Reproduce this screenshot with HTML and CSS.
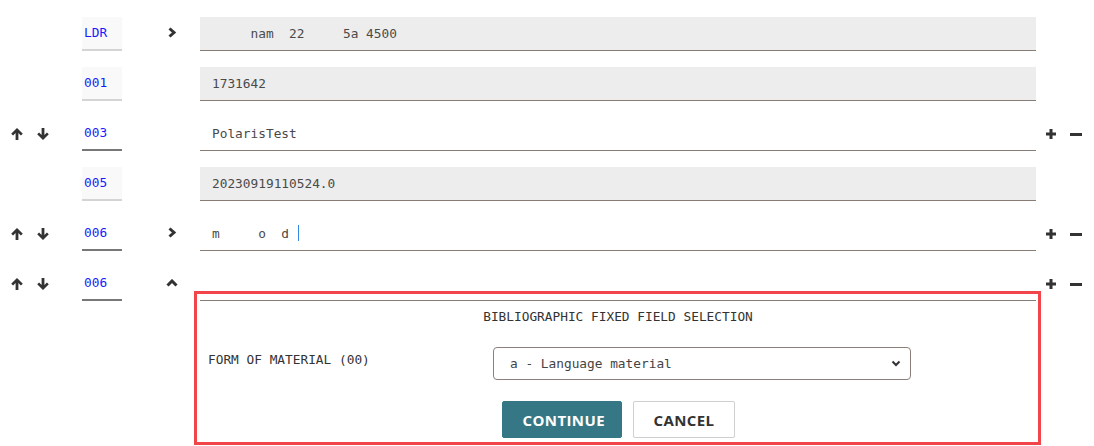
FILE: index.html
```html
<!DOCTYPE html>
<html>
	<head>
		<title>MARC editor</title>
		<link rel="stylesheet" href="styles.css">
	</head>
	<body>
		<div class="editor">
			<!-- LDR -->
			<div class="row">
				<div class="moves"></div>
				<div class="tag readonly">LDR</div>
				<div class="toggle">
					<svg class="chev" viewBox="0 0 10 11"><polyline points="2.5,1.5 7,5.5 2.5,9.5"/></svg>
				</div>
				<div class="field readonly">     nam  22     5a 4500</div>
				<div class="actions"></div>
			</div>

			<div class="row">
				<div class="moves"></div>
				<div class="tag readonly">001</div>
				<div class="toggle"></div>
				<div class="field readonly">1731642</div>
				<div class="actions"></div>
			</div>

			<div class="row">
				<div class="moves">
					<svg class="arrow" viewBox="0 0 12 12"><path d="M6 0L11.8 5.8 9.9 7.6 7.4 5.1V12H4.6V5.1L2.1 7.6 0.2 5.8Z"/></svg>
					<svg class="arrow down" viewBox="0 0 12 12"><path d="M6 0L11.8 5.8 9.9 7.6 7.4 5.1V12H4.6V5.1L2.1 7.6 0.2 5.8Z"/></svg>
				</div>
				<div class="tag">003</div>
				<div class="toggle"></div>
				<div class="field">PolarisTest</div>
				<div class="actions">
					<svg class="plus" viewBox="0 0 10 10"><rect x="3.5" y="0" width="3" height="10"/><rect x="0" y="3.5" width="10" height="3"/></svg>
					<svg class="minus" viewBox="0 0 12 3"><rect x="0" y="0" width="12" height="3"/></svg>
				</div>
			</div>

			<div class="row">
				<div class="moves"></div>
				<div class="tag readonly">005</div>
				<div class="toggle"></div>
				<div class="field readonly">20230919110524.0</div>
				<div class="actions"></div>
			</div>

			<div class="row">
				<div class="moves">
					<svg class="arrow" viewBox="0 0 12 12"><path d="M6 0L11.8 5.8 9.9 7.6 7.4 5.1V12H4.6V5.1L2.1 7.6 0.2 5.8Z"/></svg>
					<svg class="arrow down" viewBox="0 0 12 12"><path d="M6 0L11.8 5.8 9.9 7.6 7.4 5.1V12H4.6V5.1L2.1 7.6 0.2 5.8Z"/></svg>
				</div>
				<div class="tag">006</div>
				<div class="toggle">
					<svg class="chev" viewBox="0 0 10 11"><polyline points="2.5,1.5 7,5.5 2.5,9.5"/></svg>
				</div>
				<div class="field">m     o  d <span class="caret"></span></div>
				<div class="actions">
					<svg class="plus" viewBox="0 0 10 10"><rect x="3.5" y="0" width="3" height="10"/><rect x="0" y="3.5" width="10" height="3"/></svg>
					<svg class="minus" viewBox="0 0 12 3"><rect x="0" y="0" width="12" height="3"/></svg>
				</div>
			</div>

			<!-- 006 expanded -->
			<div class="row open">
				<div class="moves">
					<svg class="arrow" viewBox="0 0 12 12"><path d="M6 0L11.8 5.8 9.9 7.6 7.4 5.1V12H4.6V5.1L2.1 7.6 0.2 5.8Z"/></svg>
					<svg class="arrow down" viewBox="0 0 12 12"><path d="M6 0L11.8 5.8 9.9 7.6 7.4 5.1V12H4.6V5.1L2.1 7.6 0.2 5.8Z"/></svg>
				</div>
				<div class="tag">006</div>
				<div class="toggle">
					<svg class="chev up" viewBox="0 0 12 8"><polyline points="1.5,6.5 6,2 10.5,6.5"/></svg>
				</div>
				<div class="panel">
					<div class="panel-inner">
						<div class="panel-title">BIBLIOGRAPHIC FIXED FIELD SELECTION</div>
						<div class="form-row">
							<label class="form-label">FORM OF MATERIAL (00)</label>
							<div class="select">
								<span>a - Language material</span>
								<svg class="select-chev" viewBox="0 0 10 7"><polyline points="1.5,1.5 5,5 8.5,1.5"/></svg>
							</div>
						</div>
						<div class="buttons">
							<button class="btn primary">CONTINUE</button>
							<button class="btn">CANCEL</button>
						</div>
					</div>
				</div>
				<div class="actions">
					<svg class="plus" viewBox="0 0 10 10"><rect x="3.5" y="0" width="3" height="10"/><rect x="0" y="3.5" width="10" height="3"/></svg>
					<svg class="minus" viewBox="0 0 12 3"><rect x="0" y="0" width="12" height="3"/></svg>
				</div>
			</div>
		</div>
	</body>
</html>
```

FILE: styles.css
```css
body{
	margin: 0;
	background: #fff;
	font-family: "DejaVu Sans Mono", "Liberation Mono", monospace;
	font-size: 12.8px;
	color: #4a4a4a;
}
.editor{
	padding-top: 17px;
}
.row{
	display: grid;
	grid-template-columns: 82px 40px 78px 836px 58px;
	align-items: start;
	margin-bottom: 16px;
}
.row.open{
	margin-bottom: 0;
}
.moves{
	height: 34px;
	display: flex;
	align-items: center;
	padding-left: 11px;
	gap: 14px;
}
.arrow{
	width: 12px;
	height: 12px;
	fill: #333;
}
.arrow.down{
	transform: rotate(180deg);
}
.tag{
	height: 32px;
	line-height: 32px;
	padding-left: 2px;
	color: #1a1aff;
	border-bottom: 2px solid #777;
}
.tag.readonly{
	background: #f9f9f9;
	border-bottom-color: #d4d4d4;
}
.toggle{
	height: 34px;
	display: flex;
	align-items: center;
	padding-left: 45px;
	padding-bottom: 4px;
	box-sizing: border-box;
}
.chev{
	width: 10px;
	height: 11px;
	fill: none;
	stroke: #333;
	stroke-width: 3;
}
.chev.up{
	width: 12px;
	height: 8px;
	margin-left: -1px;
	margin-top: 2px;
}
.field{
	height: 33px;
	line-height: 33px;
	padding-left: 12px;
	white-space: pre;
	border-bottom: 1px solid #877d74;
}
.field.readonly{
	background: #ededed;
}
.caret{
	display: inline-block;
	width: 1px;
	height: 16px;
	background: #2f8ae0;
	vertical-align: middle;
	margin-top: -3px;
	margin-left: 1px;
}
.actions{
	height: 34px;
	display: flex;
	align-items: center;
	padding-left: 10px;
	gap: 14px;
}
.plus{
	width: 10px;
	height: 10px;
	fill: #333;
}
.minus{
	width: 12px;
	height: 3px;
	fill: #333;
}
.panel{
	margin: 24px -5px 0 -6px;
	border: 3px solid #f1454a;
	padding: 6px 3px 4px 3px;
}
.panel-inner{
	border-top: 1px solid #877d74;
	margin-right: -1px;
}
.panel-title{
	text-align: center;
	margin-top: 8px;
	line-height: 16px;
	color: #333;
}
.form-row{
	display: grid;
	grid-template-columns: 293px 418px;
	margin-top: 22px;
}
.form-label{
	padding-left: 8px;
	margin-top: 5px;
	line-height: 16px;
	color: #333;
}
.select{
	height: 31px;
	border: 1px solid #8a8079;
	border-radius: 4px;
	display: flex;
	align-items: center;
	justify-content: space-between;
	padding: 0 9px 0 16px;
	color: #444;
}
.select-chev{
	width: 10px;
	height: 7px;
	fill: none;
	stroke: #333;
	stroke-width: 2;
}
.buttons{
	display: flex;
	justify-content: center;
	gap: 11px;
	margin-top: 21px;
	padding-left: 1px;
}
.btn{
	height: 37px;
	padding: 0 20px;
	border: 1px solid #cfcfcf;
	border-radius: 2px;
	background: #fff;
	color: #333;
	font-family: "Open Sans", sans-serif;
	font-weight: 700;
	font-size: 15px;
	letter-spacing: 0.4px;
	cursor: pointer;
}
.btn.primary{
	width: 120px;
	background: #357785;
	border-color: #357785;
	color: #fff;
}
```
